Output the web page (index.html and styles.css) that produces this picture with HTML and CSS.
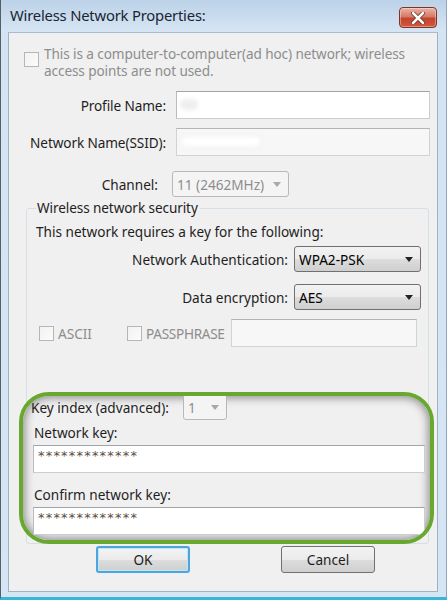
FILE: index.html
```html
<!DOCTYPE html>
<html>
<head>
<meta charset="utf-8">
<link rel="stylesheet" href="styles.css">
</head>
<body>
<div class="window">
  <div class="titlebar">
    <span class="title">Wireless Network Properties:</span>
    <span class="close">
      <svg width="16" height="12" viewBox="0 0 16 12"><path d="M3 1 L13 11 M13 1 L3 11" stroke="#6b2016" stroke-width="4" stroke-linecap="round"/><path d="M3 1 L13 11 M13 1 L3 11" stroke="#fff" stroke-width="2.6" stroke-linecap="round"/></svg>
    </span>
  </div>
  <div class="client">
    <div class="adhoc">
      <span class="cb"></span>
      <span class="adhoc-text disabled">This is a computer-to-computer(ad hoc) network; wireless access points are not used.</span>
    </div>
    <div class="row row-profile">
      <label class="lbl lbl-wide">Profile Name:</label>
      <div class="input input-wide"><span class="blur b1"></span></div>
    </div>
    <div class="row row-ssid">
      <label class="lbl lbl-wide">Network Name(SSID):</label>
      <div class="input input-wide input-ro"><span class="blur b2"></span></div>
    </div>
    <div class="row row-channel">
      <label class="lbl lbl-chan">Channel:</label>
      <div class="select select-dis select-chan"><span>11 (2462MHz)</span><span class="arrow"></span></div>
    </div>

    <div class="group">
      <div class="legend">Wireless network security</div>
      <div class="req">This network requires a key for the following:</div>
      <div class="row row-auth">
        <label class="lbl lbl-sec">Network Authentication:</label>
        <div class="select select-sec"><span>WPA2-PSK</span><span class="arrow"></span></div>
      </div>
      <div class="row row-enc">
        <label class="lbl lbl-sec">Data encryption:</label>
        <div class="select select-sec"><span>AES</span><span class="arrow"></span></div>
      </div>
      <div class="row row-checks">
        <span class="cb"></span><span class="disabled ck-ascii">ASCII</span>
        <span class="cb"></span><span class="disabled ck-pass">PASSPHRASE</span>
        <div class="input input-pass input-ro"></div>
      </div>

      <div class="highlight">
        <div class="row row-keyidx">
          <label class="keylbl">Key index (advanced):</label>
          <div class="select select-dis select-idx"><span>1</span><span class="arrow"></span></div>
        </div>
        <div class="keylbl2">Network key:</div>
        <div class="input input-key"><span class="stars">*************</span></div>
        <div class="keylbl2 confirm">Confirm network key:</div>
        <div class="input input-key"><span class="stars">*************</span></div>
      </div>
    </div>

    <div class="buttons">
      <button class="btn btn-ok">OK</button>
      <button class="btn">Cancel</button>
    </div>
  </div>
</div>
</body>
</html>
```
FILE: styles.css
```css
html, body {
  margin: 0;
  padding: 0;
  width: 447px;
  height: 600px;
  overflow: hidden;
  background: #fff;
}
* { box-sizing: border-box; }
body {
  font-family: "Noto Sans", "Open Sans", sans-serif;
  font-size: 13.6px;
  color: #1e1e1e;
}
.window {
  width: 447px;
  height: 600px;
  background: linear-gradient(to bottom, #bcd2e8 0px, #d4e4f3 30px, #d6e5f3 100%);
  border-left: 1px solid #555f6a;
  border-right: 1px solid #8fa6bd;
  border-bottom: 3px solid #3ab6d4;
  padding: 0 8px 5px 7px;
  display: flex;
  flex-direction: column;
}
.titlebar {
  height: 32px;
  display: flex;
  align-items: center;
  justify-content: space-between;
  padding: 0 1px 0 2px;
  flex: none;
}
.title {
  font-size: 14.8px;
  color: #1b2430;
  letter-spacing: -0.2px;
  margin-top: -2px;
}
.close {
  width: 38px;
  height: 21px;
  margin-top: 3px;
  border: 1px solid #7d3327;
  border-radius: 4px;
  background: linear-gradient(to bottom, #eab3a6 0%, #d77a67 45%, #c4442d 55%, #d0583e 100%);
  display: flex;
  align-items: center;
  justify-content: center;
  box-shadow: inset 0 0 0 1px rgba(255,255,255,0.35);
}
.close svg { display: block; }
.client {
  flex: 1;
  background: #f0f0f0;
  border: 1px solid #9fb1c3;
  border-top-color: #a9bccf;
  position: relative;
  padding: 0;
}
.disabled { color: #8d8d8d; }
.cb {
  display: inline-block;
  width: 15px;
  height: 15px;
  border: 1px solid #b6b6b6;
  background: linear-gradient(135deg, #f2f2f2, #fbfbfb);
  flex: none;
}
.adhoc {
  display: flex;
  align-items: flex-start;
  padding: 12px 14px 0 15px;
  height: 58px;
}
.adhoc .cb { margin-top: 7px; margin-right: 5px; }
.adhoc-text { line-height: 17px; letter-spacing: -0.1px; }

.row { display: flex; align-items: center; }
.lbl { text-align: right; flex: none; white-space: nowrap; }
.lbl-wide { width: 157px; margin-right: 10px; letter-spacing: -0.1px; }
.input {
  background: #fff;
  border: 1px solid #c9ced6;
  border-top-color: #a0a4ab;
  border-left-color: #b8bcc2;
}
.input-wide { width: 254px; height: 28px; position: relative; }
.input-ro { background: #f7f7f7; border-color: #cfd3d8; border-top-color: #b1b4b9; }
.row-profile { height: 28px; }
.row-ssid { height: 28px; margin-top: 9px; }
.blur {
  position: absolute;
  top: 7px;
  height: 11px;
  border-radius: 6px;
  background: #fff;
  filter: blur(2px);
}
.b1 { left: 3px; width: 18px; background: #e2e2e2; opacity: 0.6; }
.b2 { left: 4px; width: 80px; box-shadow: 0 0 0 1px #e5e5e5; }
.row-channel { height: 26px; margin-top: 15px; }
.lbl-chan { width: 149px; margin-right: 14px; }
.select {
  display: flex;
  align-items: center;
  justify-content: space-between;
  height: 26px;
  border: 1px solid #707070;
  border-radius: 3px;
  background: linear-gradient(to bottom, #f2f2f2 0%, #ebebeb 50%, #dddddd 51%, #cfcfcf 100%);
  padding: 0 7px 0 4px;
  color: #000;
}
.select .arrow {
  width: 0; height: 0;
  border-left: 4px solid transparent;
  border-right: 4px solid transparent;
  border-top: 5px solid #222;
}
.select-dis {
  background: #f4f4f4;
  border-color: #b8b8b8;
  color: #8d8d8d;
}
.select-dis .arrow { border-top-color: #a8a8a8; }
.select-chan { width: 117px; }

.group {
  margin: 11px 8px 0 17px;
  border: 1px solid #d5dfe5;
  border-radius: 3px;
  height: 336px;
  padding: 0 0 0 9px;
  position: relative;
}
.legend {
  display: block;
  width: max-content;
  margin-top: -10px;
  background: #f0f0f0;
  padding: 0 2px 0 1px;
  line-height: 18px;
  letter-spacing: -0.1px;
}
.req { margin-top: 6px; line-height: 18px; }
.row-auth { margin-top: 5px; height: 26px; }
.row-enc { margin-top: 12px; height: 26px; }
.lbl-sec { width: 252px; margin-right: 6px; }
.select-sec { width: 127px; }
.row-checks { margin-top: 9px; height: 28px; }
.row-checks .cb { margin-left: 3px; margin-right: 4px; }
.ck-ascii { width: 66px; }
.ck-pass { margin-right: 6px; letter-spacing: -0.3px; }
.input-pass { width: 186px; height: 28px; }

.highlight {
  margin: 45px -6px 0 -17px;
  height: 152px;
  border: 4px solid #69a82e;
  border-radius: 30px;
  box-shadow: inset 0 0 9px 2px rgba(80,80,80,0.6);
  padding: 0 6px 0 10px;
  overflow: hidden;
  position: relative;
  background: #f0f0f0;
}
.row-keyidx { height: 26px; margin-top: -2px; }
.keylbl { width: 152px; margin-left: -2px; }
.select-idx { width: 44px; }
.keylbl2 { margin-top: 4px; line-height: 18px; padding-left: 1px; }
.confirm { margin-top: 13px; }
.input-key {
  width: 392px;
  height: 28px;
  margin-top: 3px;
  margin-right: -20px;
  padding: 2px 0 0 4px;
  line-height: 14px;
}
.stars {
  color: #5a4c3e;
  font-family: "DejaVu Sans", sans-serif;
  font-size: 13px;
  letter-spacing: 1.2px;
  line-height: 14px;
}
.buttons {
  display: flex;
  padding-left: 87px;
  margin-top: 2px;
  gap: 91px;
}
.btn {
  width: 94px;
  height: 27px;
  font-family: inherit;
  font-size: 13.6px;
  color: #1e1e1e;
  border: 1px solid #707070;
  border-radius: 3px;
  background: linear-gradient(to bottom, #f3f3f3 0%, #ebebeb 50%, #dddddd 51%, #cfcfcf 100%);
  padding: 0;
}
.btn-ok {
  border: 2px solid #4aa6dc;
  box-shadow: inset 0 0 0 1px #bfe6f8;
}
```
